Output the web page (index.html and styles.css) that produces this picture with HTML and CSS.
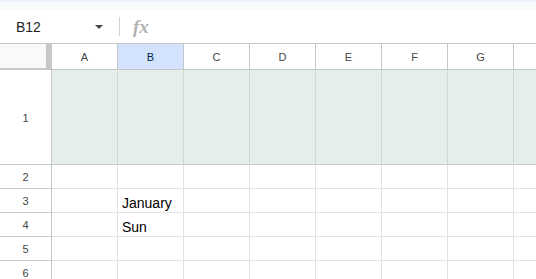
FILE: index.html
```html
<!DOCTYPE html>
<html lang="en">
  <head>
    <meta charset="UTF-8"/>
    <title>Sheet</title>
    <link rel="stylesheet" href="styles.css">
  </head>
  <body>
    <div class="topband"></div>
    <div class="formula-bar">
      <div class="name-box">
        <span class="cell-ref">B12</span>
        <span class="caret"></span>
      </div>
      <span class="divider"></span>
      <span class="fx">fx</span>
    </div>
    <div class="grid">
      <div class="corner"></div>
      <div class="colhead">A</div>
      <div class="colhead selected">B</div>
      <div class="colhead">C</div>
      <div class="colhead">D</div>
      <div class="colhead">E</div>
      <div class="colhead">F</div>
      <div class="colhead">G</div>
      <div class="colhead"></div>

      <div class="rowhead">1</div>
      <div class="cell band"></div><div class="cell band"></div><div class="cell band"></div><div class="cell band"></div>
      <div class="cell band"></div><div class="cell band"></div><div class="cell band"></div><div class="cell band"></div>

      <div class="rowhead">2</div>
      <div class="cell"></div><div class="cell"></div><div class="cell"></div><div class="cell"></div>
      <div class="cell"></div><div class="cell"></div><div class="cell"></div><div class="cell"></div>

      <div class="rowhead">3</div>
      <div class="cell"></div><div class="cell">January</div><div class="cell"></div><div class="cell"></div>
      <div class="cell"></div><div class="cell"></div><div class="cell"></div><div class="cell"></div>

      <div class="rowhead">4</div>
      <div class="cell"></div><div class="cell">Sun</div><div class="cell"></div><div class="cell"></div>
      <div class="cell"></div><div class="cell"></div><div class="cell"></div><div class="cell"></div>

      <div class="rowhead">5</div>
      <div class="cell"></div><div class="cell"></div><div class="cell"></div><div class="cell"></div>
      <div class="cell"></div><div class="cell"></div><div class="cell"></div><div class="cell"></div>

      <div class="rowhead">6</div>
      <div class="cell"></div><div class="cell"></div><div class="cell"></div><div class="cell"></div>
      <div class="cell"></div><div class="cell"></div><div class="cell"></div><div class="cell"></div>
    </div>
  </body>
</html>
```

FILE: styles.css
```css
body {
  margin: 0;
  width: 536px;
  height: 279px;
  overflow: hidden;
  background: #fff;
  font-family: "Liberation Sans", Arial, sans-serif;
}

.topband {
  height: 10px;
  background: #f9fbfd;
  border-top: 2px solid #edf2fa;
  box-sizing: border-box;
}

.formula-bar {
  height: 34px;
  display: flex;
  align-items: center;
  border-bottom: 1px solid #c4c7c5;
  box-sizing: border-box;
}

.name-box {
  width: 103px;
  padding-left: 16px;
  padding-top: 1px;
  display: flex;
  align-items: center;
  justify-content: space-between;
  box-sizing: border-box;
}

.cell-ref {
  font-size: 14px;
  color: #1f1f1f;
}

.caret {
  width: 0;
  height: 0;
  border-left: 4px solid transparent;
  border-right: 4px solid transparent;
  border-top: 4px solid #444746;
}

.divider {
  width: 1px;
  height: 19px;
  background: #d3d3d3;
  margin-left: 16px;
}

.fx {
  margin-left: 13px;
  font-family: "Liberation Serif", serif;
  font-style: italic;
  font-weight: bold;
  font-size: 19px;
  color: #b2b2b2;
}

.grid {
  display: grid;
  grid-template-columns: 52px repeat(7, 66px) 40px;
  grid-template-rows: 26px 95px repeat(5, 24px);
}

.corner {
  background: #f8f9fa;
  border-right: 6px solid #c7c7c7;
  border-bottom: 2px solid #c7c7c7;
  box-sizing: border-box;
}

.colhead,
.rowhead {
  display: flex;
  align-items: center;
  justify-content: center;
  font-size: 11px;
  color: #444746;
  border-right: 1px solid #c4c7c5;
  border-bottom: 1px solid #c4c7c5;
  box-sizing: border-box;
  padding-top: 1px;
}

.colhead.selected {
  background: #d3e3fd;
  color: #041e49;
}

.cell {
  border-right: 1px solid #e1e1e1;
  border-bottom: 1px solid #e1e1e1;
  box-sizing: border-box;
  font-size: 14px;
  color: #000;
  padding: 6px 0 0 4px;
  white-space: nowrap;
}

.cell.band {
  background: #e6eeeb;
  border-right-color: #d3d9d7;
  border-bottom-color: #c9cecc;
}
```
